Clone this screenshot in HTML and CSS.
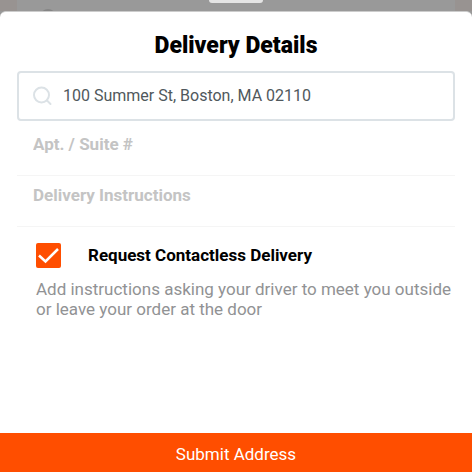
FILE: index.html
```html
<!DOCTYPE html>
<html lang="en">
<head>
<meta charset="utf-8">
<meta name="viewport" content="width=device-width, initial-scale=1">
<title>Delivery Details</title>
<link rel="stylesheet" href="styles.css">
</head>
<body>
<div class="backdrop"><span class="avatar"></span><span class="handle"></span></div>
<form class="sheet">
  <h1 class="title">Delivery Details</h1>
  <div class="fields">
    <label class="search">
      <svg class="search-icon" viewBox="0 0 20 20" aria-hidden="true"><circle cx="8.5" cy="9" r="7.5"/><path d="M14 14.5 17.5 18"/></svg>
      <input class="search-input" type="text" aria-label="Address" value="100 Summer St, Boston, MA 02110">
    </label>
    <input class="line-input" type="text" aria-label="Apt. / Suite #" placeholder="Apt. / Suite #">
    <input class="line-input" type="text" aria-label="Delivery Instructions" placeholder="Delivery Instructions">
  </div>
  <div class="option">
    <label class="option-label">
      <span class="check">
        <input class="check-input" type="checkbox" checked>
        <svg class="check-mark" viewBox="0 0 25 25" aria-hidden="true"><path d="M3 12.5 9.5 18.5 22 6"/></svg>
      </span>
      Request Contactless Delivery
    </label>
    <p class="hint">Add instructions asking your driver to meet you outside or leave your order at the door</p>
  </div>
  <button class="submit" type="submit">Submit Address</button>
</form>
</body>
</html>
```
FILE: styles.css
```css
* {
  box-sizing: border-box;
}

body {
  margin: 0;
  min-height: 100vh;
  display: flex;
  flex-direction: column;
  background: #999;
  font-family: Roboto, "Liberation Sans", sans-serif;
}

.backdrop {
  position: relative;
  height: 11px;
  border: solid #989391;
  border-width: 0 17px;
  overflow: hidden;
}

.avatar {
  position: absolute;
  top: 9px;
  left: 23px;
  width: 16px;
  height: 16px;
  border-radius: 50%;
  background: #858585;
}

.handle {
  display: block;
  width: 54px;
  height: 3px;
  margin: 0 auto;
  border-radius: 0 0 4px 4px;
  background: #e4e4e4;
}

.sheet {
  flex: 1;
  display: flex;
  flex-direction: column;
  border-top: 1px solid #ccc;
  border-radius: 6px 6px 0 0;
  background: #fff;
}

.title {
  margin: 20px 0 11px;
  text-align: center;
  font-size: 23px;
  line-height: 28px;
  font-weight: 900;
  color: #000;
}

.fields {
  display: flex;
  flex-direction: column;
  margin: 0 17px;
}

.search {
  display: flex;
  align-items: center;
  gap: 10px;
  height: 50px;
  padding: 0 14px;
  border: 2px solid #dce2e6;
  border-radius: 4px;
}

.search-icon {
  flex: none;
  width: 20px;
  height: 20px;
  fill: none;
  stroke: #dce2e6;
  stroke-width: 2;
  stroke-linecap: round;
}

.search-input {
  flex: 1;
  min-width: 0;
  padding: 0;
  border: 0;
  outline: 0;
  background: none;
  font: 400 16px/24px Roboto, "Liberation Sans", sans-serif;
  color: #50585c;
}

.line-input {
  height: 51px;
  padding: 0 16px 12px;
  border: 0;
  border-bottom: 1px solid #f5f5f5;
  outline: 0;
  background: none;
  font: 700 17px/24px Roboto, "Liberation Sans", sans-serif;
  color: #000;
}

.line-input:first-of-type {
  height: 55px;
  padding-bottom: 8px;
}

.line-input::placeholder {
  color: #c4c4c4;
  opacity: 1;
}

.option {
  padding: 16px 16px 24px 36px;
}

.option-label {
  display: flex;
  align-items: center;
  gap: 27px;
  font-size: 17px;
  line-height: 25px;
  font-weight: 700;
  color: #000;
}

.check {
  position: relative;
  flex: none;
  width: 25px;
  height: 25px;
}

.check-input {
  appearance: none;
  display: block;
  width: 100%;
  height: 100%;
  margin: 0;
  border-radius: 2px;
  background: #ff4e00;
}

.check-mark {
  position: absolute;
  inset: 0;
  width: 100%;
  height: 100%;
  fill: none;
  stroke: #fff;
  stroke-width: 2.5;
  pointer-events: none;
}

.hint {
  margin: 11px 0 0;
  font-size: 17px;
  line-height: 20px;
  color: #919294;
}

.submit {
  height: 39px;
  margin-top: auto;
  padding: 2px 0 0;
  border: 0;
  background: #ff4e00;
  font: 400 17px/24px Roboto, "Liberation Sans", sans-serif;
  color: #fff;
}
```
